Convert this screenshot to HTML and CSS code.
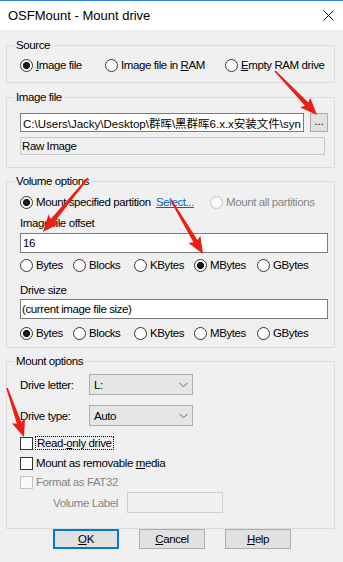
FILE: index.html
```html
<!DOCTYPE html>
<html lang="en">
<head>
  <meta charset="UTF-8">
  <title>OSFMount - Mount drive</title>
  <link rel="stylesheet" href="styles.css">
</head>
<body>
<div class="titlebar">
  <span class="title">OSFMount - Mount drive</span>
  <svg class="close" width="11" height="11" viewBox="0 0 11 11">
    <path d="M0.5 0.5L10.5 10.5M10.5 0.5L0.5 10.5" stroke="#111" stroke-width="1"/>
  </svg>
</div>

<div class="content">
  <fieldset class="group g-source">
    <legend>Source</legend>
    <div class="row cols-source">
      <label class="opt"><input type="radio" name="src" checked><span><u>I</u>mage file</span></label>
      <label class="opt"><input type="radio" name="src"><span>Image file in <u>R</u>AM</span></label>
      <label class="opt"><input type="radio" name="src"><span><u>E</u>mpty RAM drive</span></label>
    </div>
  </fieldset>

  <fieldset class="group g-image">
    <legend>Image file</legend>
    <div class="path-row">
      <input class="field path" type="text" value="C:\Users\Jacky\Desktop\群晖\黑群晖6.x.x安装文件\synoboot.img">
      <button class="browse">...</button>
    </div>
    <div class="static">Raw Image</div>
  </fieldset>

  <fieldset class="group g-volume">
    <legend>Volume options</legend>
    <div class="row cols-part">
      <label class="opt"><input type="radio" name="part" checked><span>Mount specified partition</span></label>
      <a class="link" href="#">Select...</a>
      <label class="opt off"><input type="radio" name="part" disabled><span>Mount all partitions</span></label>
    </div>
    <div class="caption cap-offset">Image file offset</div>
    <input class="field tall" type="text" value="16">
    <div class="row cols-units units-offset">
      <label class="opt"><input type="radio" name="ou"><span>Bytes</span></label>
      <label class="opt"><input type="radio" name="ou"><span>Blocks</span></label>
      <label class="opt"><input type="radio" name="ou"><span>KBytes</span></label>
      <label class="opt"><input type="radio" name="ou" checked><span>MBytes</span></label>
      <label class="opt"><input type="radio" name="ou"><span>GBytes</span></label>
    </div>
    <div class="caption cap-size">Drive size</div>
    <input class="field tall size" type="text" value="(current image file size)">
    <div class="row cols-units units-size">
      <label class="opt"><input type="radio" name="su" checked><span>Bytes</span></label>
      <label class="opt"><input type="radio" name="su"><span>Blocks</span></label>
      <label class="opt"><input type="radio" name="su"><span>KBytes</span></label>
      <label class="opt"><input type="radio" name="su"><span>MBytes</span></label>
      <label class="opt"><input type="radio" name="su"><span>GBytes</span></label>
    </div>
  </fieldset>

  <fieldset class="group g-mount">
    <legend>Mount options</legend>
    <div class="combo-row first">
      <span>Drive letter:</span>
      <div class="combo"><span>L:</span>
        <svg width="9" height="6" viewBox="0 0 9 6"><path d="M0.5 0.8L4.5 4.8L8.5 0.8" fill="none" stroke="#666" stroke-width="1"/></svg>
      </div>
    </div>
    <div class="combo-row second">
      <span>Drive type:</span>
      <div class="combo"><span>Auto</span>
        <svg width="9" height="6" viewBox="0 0 9 6"><path d="M0.5 0.8L4.5 4.8L8.5 0.8" fill="none" stroke="#666" stroke-width="1"/></svg>
      </div>
    </div>
    <label class="row opt check-ro"><input type="checkbox"><span class="focus">Read-<u>o</u>nly drive</span></label>
    <label class="row opt check-rm"><input type="checkbox"><span>Mount as removable <u>m</u>edia</span></label>
    <label class="row opt off check-fat"><input type="checkbox" disabled><span>Format as FAT32</span></label>
    <div class="vol-row">
      <span>Volume Label</span>
      <div class="vol-box"></div>
    </div>
  </fieldset>

  <div class="buttons">
    <button class="btn default"><u>O</u>K</button>
    <button class="btn"><u>C</u>ancel</button>
    <button class="btn"><u>H</u>elp</button>
  </div>
</div>

<!-- red annotation arrows drawn over the dialog -->
<svg class="marks" width="343" height="562" viewBox="0 0 343 562">
  <g fill="#ec1f16">
    <polygon transform="translate(275 71) rotate(46.3)" points="0,-0.8 45.8,-2.4 43.8,-7 60.8,0 43.8,7 45.8,2.4 0,0.8"/>
    <polygon transform="translate(88 178) rotate(129.8)" points="0,-0.8 55.3,-2.4 53.3,-7 70.3,0 53.3,7 55.3,2.4 0,0.8"/>
    <polygon transform="translate(171 200) rotate(59.3)" points="0,-0.8 47.8,-2.4 45.8,-7 62.8,0 45.8,7 47.8,2.4 0,0.8"/>
    <polygon transform="translate(7 388) rotate(70.9)" points="0,-0.8 36.9,-2.4 34.9,-7 51.9,0 34.9,7 36.9,2.4 0,0.8"/>
  </g>
</svg>
</body>
</html>
```

FILE: styles.css
```css
* {
  box-sizing: border-box;
}

body {
  margin: 0;
  width: 343px;
  height: 562px;
  position: relative;
  overflow: hidden;
  background-color: #f0f0f0;
  font-family: "Liberation Sans", "Noto Sans CJK SC", sans-serif;
  font-size: 11.5px;
  letter-spacing: -0.4px;
  color: #000;
}

.titlebar {
  height: 30px;
  background-color: #fff;
  border-top: 1px solid #2f7fd6;
  display: flex;
  align-items: center;
  justify-content: space-between;
  padding: 0 9px 0 8px;
}

.title {
  font-size: 13px;
  letter-spacing: 0;
}

.content {
  padding: 0 8px 0 6px;
}

/* group boxes */
.group {
  margin: 0;
  min-width: 0;
  border: 1px solid #dcdcdc;
  padding: 0 6px 0 13px;
}

.group legend {
  padding: 0 2px;
  margin-left: -6px;
  line-height: 14px;
}

.g-source {
  margin-top: 8px;
  padding-bottom: 10px;
}

.g-image {
  margin-top: 7px;
  padding-bottom: 12px;
}

.g-volume {
  margin-top: 6px;
  padding-bottom: 7px;
}

.g-mount {
  margin-top: 6px;
  padding-bottom: 15px;
}

.row {
  display: grid;
  align-items: center;
  height: 14px;
  line-height: 14px;
}

.cols-source {
  grid-template-columns: 85px 120px auto;
  margin-top: 6px;
}

.cols-part {
  grid-template-columns: 136px 54px auto;
  margin-top: 7px;
}

.cols-units {
  grid-template-columns: 53px 61px 60px 63px auto;
}

.units-offset {
  margin-top: 5px;
}

.units-size {
  margin-top: 7px;
}

/* radio buttons and check boxes */
.opt {
  display: flex;
  align-items: center;
  gap: 3px;
  white-space: nowrap;
}

.opt input {
  appearance: none;
  margin: 0;
  flex: none;
  width: 13px;
  height: 13px;
  border: 1px solid #333;
  border-radius: 50%;
  background: #fff;
}

.opt input:checked {
  background: radial-gradient(circle, #1a1a1a 0 3.2px, #fff 3.9px);
}

.opt input[type="checkbox"] {
  border-radius: 0;
}

.opt.off {
  color: #858585;
}

.opt.off input {
  border-color: #c4c4c4;
  background: #fafafa;
}

.link {
  color: #0066cc;
  text-decoration: underline;
}

/* text boxes */
.field {
  display: block;
  width: 100%;
  height: 19px;
  margin: 0;
  padding: 0 2px;
  border: 1px solid #7a7a7a;
  background: #fff;
  font: inherit;
  letter-spacing: inherit;
  color: #000;
  outline: none;
}

.field.path {
  letter-spacing: 0;
}

.field.tall {
  height: 20px;
}

.field.size {
  margin-top: 2px;
  padding-left: 1px;
}

.path-row {
  display: flex;
  margin-top: 9px;
}

.path-row .field {
  flex: 1;
}

.browse {
  flex: none;
  width: 18px;
  height: 19px;
  margin: 0 0 0 6px;
  padding: 0 0 4px;
  border: 1px solid #adadad;
  background: #e1e1e1;
  font: inherit;
  letter-spacing: 0;
  line-height: 8px;
  color: #000;
}

.static {
  height: 18px;
  margin: 5px 3px 0 0;
  padding: 0 1px;
  line-height: 16px;
  border: 1px solid #c9c9c9;
  background: #f0f0f0;
}

.caption {
  line-height: 14px;
}

.cap-offset {
  margin-top: 7px;
  margin-bottom: 3px;
}

.cap-size {
  margin-top: 11px;
}

/* drop downs */
.combo-row {
  display: grid;
  grid-template-columns: 69px 104px;
  align-items: center;
}

.combo-row.first {
  margin-top: 6px;
}

.combo-row.second {
  margin-top: 10px;
}

.combo {
  height: 21px;
  display: flex;
  align-items: center;
  justify-content: space-between;
  padding: 0 4px 0 4px;
  border: 1px solid #adadad;
  background: #e5e5e5;
}

.check-ro {
  margin-top: 10px;
}

.check-rm {
  margin-top: 6px;
}

.check-fat {
  margin-top: 5px;
}

.focus {
  outline: 1px dotted #000;
  padding: 0 1px;
  line-height: 12px;
}

.vol-row {
  display: grid;
  grid-template-columns: 74px 96px;
  align-items: center;
  margin-top: 3px;
  padding-left: 33px;
  color: #858585;
}

.vol-box {
  height: 21px;
  border: 1px solid #cfcfcf;
  background: #f0f0f0;
}

/* dialog buttons */
.buttons {
  display: flex;
  gap: 20px;
  padding-left: 47px;
}

.btn {
  width: 66px;
  height: 20px;
  padding: 0;
  border: 1px solid #adadad;
  background: #e1e1e1;
  font: inherit;
  letter-spacing: inherit;
  color: #000;
}

.btn.default {
  border: 2px solid #0078d7;
}

.marks {
  position: absolute;
  left: 0;
  top: 0;
  pointer-events: none;
}
```
